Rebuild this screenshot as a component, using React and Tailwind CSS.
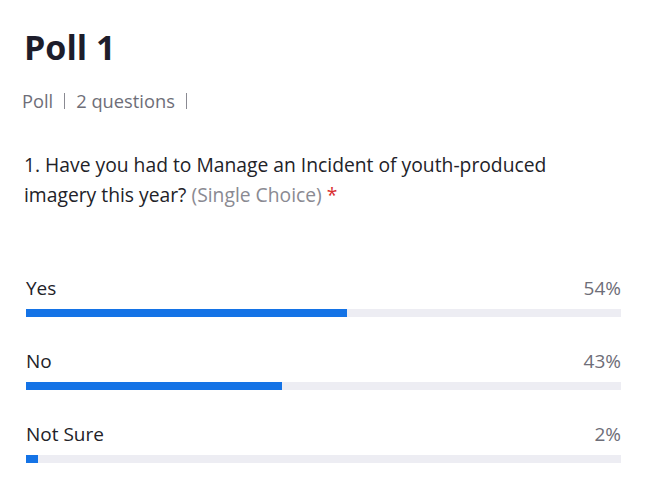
export default function App() {
  const rows = [
    { label: "Yes", pct: 54 },
    { label: "No", pct: 43 },
    { label: "Not Sure", pct: 2 },
  ];
  return (
    <div className="w-[658px] h-[493px] bg-white pl-[24px] pr-[37px] pt-[23px]" style={{ fontFamily: '"Open Sans", "Noto Sans", sans-serif' }}>
      <h1 className="text-[34px] leading-[48px] font-bold text-[#1d1d2b]">Poll 1</h1>
      <div className="mt-[18px] flex items-center text-[18.3px] leading-[24px] text-[#6e6e78] -ml-[2px]">
        <span>Poll</span>
        <span className="mx-[11px] w-px h-[16px] bg-[#8a8a92]"></span>
        <span>2 questions</span>
        <span className="ml-[11px] w-px h-[16px] bg-[#8a8a92]"></span>
      </div>
      <p className="mt-[37px] w-[560px] text-[19.3px] leading-[30px] text-[#222228]">
        1. Have you had to Manage an Incident of youth-produced imagery this year?{" "}
        <span className="text-[#8a8a92]">(Single Choice)</span>{" "}
        <span className="text-[#d93030]">*</span>
      </p>
      <div className="mt-[66px] ml-[2px] flex flex-col gap-[32px]">
        {rows.map((r) => (
          <div key={r.label}>
            <div className="flex justify-between items-end text-[19px] leading-[24px]">
              <span className="text-[#222228]">{r.label}</span>
              <span className="text-[#6e6e78]">{r.pct}%</span>
            </div>
            <div className="mt-[9px] h-[8px] bg-[#ededf3]">
              <div className="h-full bg-[#1473e6]" style={{ width: `${r.pct}%` }}></div>
            </div>
          </div>
        ))}
      </div>
    </div>
  );
}
